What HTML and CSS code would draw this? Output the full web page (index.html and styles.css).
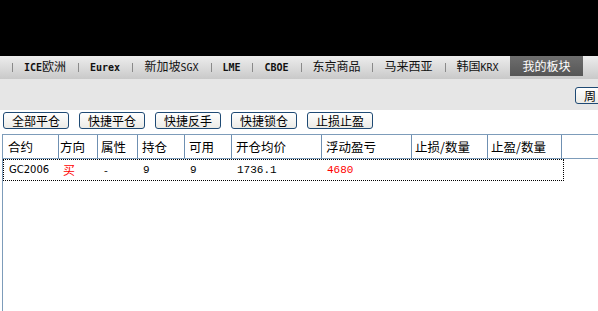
FILE: index.html
```html
<!DOCTYPE html>
<html lang="zh-CN">
<head>
    <meta charset="UTF-8">
    <title>持仓</title>
    <link rel="stylesheet" href="styles.css">
</head>
<body>
    <div class="topbar"></div>
    <div class="tabbar">
        <div class="tab"><span class="en">ICE</span>欧洲</div>
        <div class="tab w54"><span class="en">Eurex</span></div>
        <div class="tab w79">新加坡<span class="en thin">SGX</span></div>
        <div class="tab w41"><span class="en">LME</span></div>
        <div class="tab w49"><span class="en">CBOE</span></div>
        <div class="tab w71">东京商品</div>
        <div class="tab w73">马来西亚</div>
        <div class="tab w65">韩国<span class="en thin">KRX</span></div>
        <div class="tab active">我的板块</div>
    </div>
    <div class="toolbar">
        <button class="btn btn-edge">周</button>
    </div>
    <div class="actions">
        <button class="btn">全部平仓</button>
        <button class="btn">快捷平仓</button>
        <button class="btn">快捷反手</button>
        <button class="btn">快捷锁仓</button>
        <button class="btn">止损止盈</button>
    </div>
    <div class="grid">
        <div class="row head">
            <div class="cell c1">合约</div>
            <div class="cell c2">方向</div>
            <div class="cell c3">属性</div>
            <div class="cell c4">持仓</div>
            <div class="cell c5">可用</div>
            <div class="cell c6">开仓均价</div>
            <div class="cell c7">浮动盈亏</div>
            <div class="cell c8">止损/数量</div>
            <div class="cell c9">止盈/数量</div>
            <div class="cell rest"></div>
        </div>
        <div class="row data">
            <div class="cell c1 small">GC2006</div>
            <div class="cell c2 red">买</div>
            <div class="cell c3">-</div>
            <div class="cell c4 num">9</div>
            <div class="cell c5 num">9</div>
            <div class="cell c6 num">1736.1</div>
            <div class="cell c7 num red">4680</div>
            <div class="cell c8"></div>
            <div class="cell c9"></div>
        </div>
    </div>
</body>
</html>
```
FILE: styles.css
```css
body {
    margin: 0;
    padding: 0;
    width: 598px;
    height: 311px;
    overflow: hidden;
    background-color: white;
    font-family: "Noto Sans CJK SC", "DejaVu Sans", sans-serif;
    font-size: 12px;
    color: black;
}
.topbar {
    height: 56px;
    background-color: black;
}
.tabbar {
    height: 23px;
    padding-left: 12px;
    display: flex;
    align-items: flex-start;
    background: linear-gradient(#ededed, #c9c9c9);
}
.tab {
    position: relative;
    width: 66px;
    height: 20px;
    line-height: 20px;
    text-align: center;
    color: #111;
    white-space: nowrap;
}
.tab::before {
    content: "";
    position: absolute;
    left: 0;
    top: 7px;
    width: 1px;
    height: 9px;
    background-color: #8a8a8a;
}
.tab.w54 { width: 54px; }
.tab.w79 { width: 79px; }
.tab.w41 { width: 41px; }
.tab.w49 { width: 49px; }
.tab.w71 { width: 71px; }
.tab.w73 { width: 73px; }
.tab.w65 { width: 65px; }
.tab.active {
    width: 73px;
    color: white;
    background: linear-gradient(#6e6e6e, #565656);
}
.tab.active::before {
    display: none;
}
.en {
    font-family: "DejaVu Sans Mono", monospace;
    font-weight: bold;
    font-size: 10px;
}
.en.thin {
    font-weight: normal;
}
.toolbar {
    height: 31px;
    background-color: #e6e6e6;
    display: flex;
    justify-content: flex-end;
    align-items: flex-start;
    overflow: hidden;
}
.btn {
    width: 66px;
    height: 17px;
    padding: 0;
    border: 1px solid #1f4a74;
    border-radius: 3px;
    background: linear-gradient(#ffffff, #ecebe6);
    font-family: "Noto Sans CJK SC", sans-serif;
    font-size: 12px;
    line-height: 15px;
    color: black;
}
.btn-edge {
    margin-top: 8px;
    margin-right: -43px;
    text-align: left;
    padding-left: 8px;
}
.actions {
    display: flex;
    gap: 10px;
    padding: 2px 0 0 3px;
    height: 22px;
}
.grid {
    margin-left: 2px;
    height: 177px;
    border-left: 1px solid #7d9cba;
}
.row {
    display: flex;
}
.row.head {
    height: 23px;
    border-top: 1px solid #7d9cba;
    border-bottom: 1px solid #7d9cba;
}
.cell {
    box-sizing: border-box;
    padding-left: 4px;
    white-space: nowrap;
}
.head .cell {
    line-height: 23px;
    border-right: 1px solid #6f90b2;
    font-size: 12.5px;
}
.head .cell.rest {
    flex: 1;
    border-right: none;
}
.c1 { width: 56px; padding-left: 5px; }
.c2 { width: 39px; padding-left: 1px; }
.c3 { width: 40px; padding-left: 3px; }
.c4 { width: 47px; }
.c5 { width: 47px; }
.c6 { width: 90px; }
.c7 { width: 90px; }
.c8 { width: 76px; padding-left: 3px; }
.c9 { width: 74px; padding-left: 3px; }
.row.data {
    width: 559px;
    height: 20px;
    line-height: 20px;
    border: 1px dotted black;
    box-sizing: content-box;
}
.data .cell {
    padding-left: 5px;
    font-size: 11px;
}
.data .c1 { width: 55px; }
.data .c2 { padding-left: 4px; font-size: 12px; }
.data .c3 { padding-left: 6px; }
.small {
    font-family: "DejaVu Sans", sans-serif;
    font-size: 10px !important;
}
.num {
    font-family: "Liberation Mono", monospace;
}
.red {
    color: #ff0000;
}
```
